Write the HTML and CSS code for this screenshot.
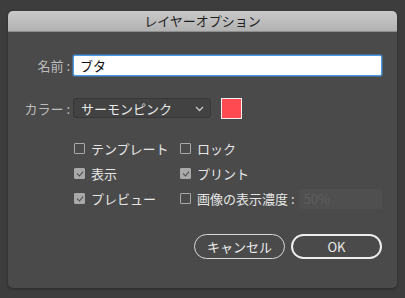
FILE: index.html
```html
<!DOCTYPE html>
<html lang="ja">
<head>
    <meta charset="UTF-8">
    <title>レイヤーオプション</title>
    <link rel="stylesheet" href="styles.css">
</head>
<body>
    <div class="dialog">
        <div class="titlebar">レイヤーオプション</div>

        <div class="content">
            <div class="row name-row">
                <label class="label" for="name">名前 :</label>
                <input class="text-input" id="name" type="text" value="ブタ">
            </div>

            <div class="row color-row">
                <span class="label">カラー :</span>
                <div class="select">
                    <span>サーモンピンク</span>
                    <svg class="chevron" width="9" height="6" viewBox="0 0 9 6">
                        <path d="M1 1 L4.5 4.5 L8 1" fill="none" stroke="#c8c8c8" stroke-width="1.3"/>
                    </svg>
                </div>
                <div class="swatch"></div>
            </div>

            <div class="options">
                <div class="option"><span class="box"></span>テンプレート</div>
                <div class="option"><span class="box"></span>ロック</div>
                <div class="option"><span class="box checked"></span>表示</div>
                <div class="option"><span class="box checked"></span>プリント</div>
                <div class="option"><span class="box checked"></span>プレビュー</div>
                <div class="option"><span class="box"></span>画像の表示濃度 :
                    <input class="dim-input" type="text" placeholder="50%" disabled>
                </div>
            </div>

            <div class="buttons">
                <button class="btn">キャンセル</button>
                <button class="btn btn-default">OK</button>
            </div>
        </div>
    </div>
</body>
</html>
```

FILE: styles.css
```css
* {
    margin: 0;
    padding: 0;
    box-sizing: border-box;
}

body {
    background: #3d3d3d;
    font-family: "Noto Sans CJK JP", "Liberation Sans", sans-serif;
    font-size: 13px;
    color: #e0e0e0;
    padding: 11px 8px 0 8px;
    height: 298px;
    overflow: hidden;
}

.dialog {
    width: 389px;
    height: 277px;
    background: #4a4a4a;
    border-radius: 5px;
    overflow: hidden;
    box-shadow: 0 1px 3px rgba(0, 0, 0, 0.35);
}

.titlebar {
    height: 21px;
    background: linear-gradient(#c9c9c9, #b2b2b2);
    border-bottom: 1px solid #8e8e8e;
    color: #1e1e1e;
    text-align: center;
    font-size: 13px;
    line-height: 20px;
}

.content {
    padding: 23px 0 0 0;
}

.row {
    display: flex;
    align-items: center;
    height: 20px;
}

.label {
    width: 65px;
    padding-right: 3px;
    text-align: right;
    color: #bdbdbd;
    white-space: nowrap;
}

.text-input {
    width: 309px;
    height: 21px;
    border: 1px solid #4a9be8;
    border-radius: 2px;
    background: #fff;
    color: #111;
    font-family: inherit;
    font-size: 13px;
    padding: 0 6px;
    outline: none;
    box-shadow: 0 0 0 1px rgba(74, 155, 232, 0.4);
}

.color-row {
    margin-top: 23px;
}

.select {
    width: 138px;
    height: 20px;
    background: #424242;
    border: 1px solid #373737;
    border-radius: 3px;
    display: flex;
    align-items: center;
    justify-content: space-between;
    padding: 0 6px 0 7px;
    color: #e8e8e8;
}

.chevron {
    margin-top: 1px;
}

.swatch {
    width: 21px;
    height: 21px;
    margin-left: 10px;
    background: #ff4a52;
    border: 1px solid #f2f2f2;
}

.options {
    display: grid;
    grid-template-columns: 106px auto;
    grid-auto-rows: 25px;
    margin: 18px 0 0 66px;
}

.option {
    display: flex;
    align-items: center;
    color: #e6e6e6;
    white-space: nowrap;
}

.box {
    width: 11px;
    height: 11px;
    border: 1px solid #a8a8a8;
    border-radius: 1px;
    margin-right: 6px;
    position: relative;
}

.box.checked {
    background: #a9a9a9;
}

.box.checked::after {
    content: '';
    position: absolute;
    left: 3px;
    top: 1px;
    width: 3px;
    height: 5px;
    border: solid #4a4a4a;
    border-width: 0 1.5px 1.5px 0;
    transform: rotate(40deg);
}

.dim-input {
    width: 83px;
    height: 20px;
    margin-left: 4px;
    background: #4f4f4f;
    border: none;
    border-radius: 2px;
    font-family: inherit;
    font-size: 13px;
    padding: 0 5px;
}

.dim-input::placeholder {
    color: #5e5e5e;
}

.buttons {
    display: flex;
    justify-content: flex-end;
    gap: 6px;
    margin: 23px 15px 0 0;
}

.btn {
    width: 91px;
    height: 25px;
    border-radius: 13px;
    border: 1.5px solid #d8d8d8;
    background: transparent;
    color: #ececec;
    font-family: inherit;
    font-size: 13px;
}

.btn-default {
    border-width: 2px;
    border-color: #eeeeee;
}
```
